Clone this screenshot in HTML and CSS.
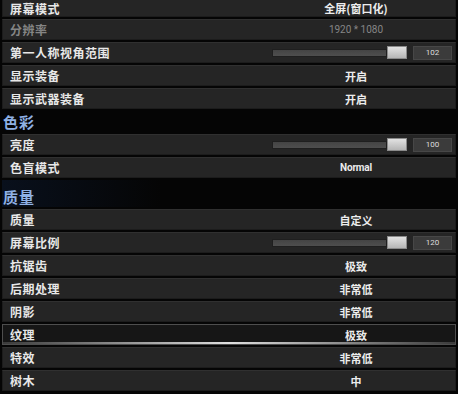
FILE: index.html
```html
<!DOCTYPE html>
<html>
<head>
    <title>画面设置</title>
    <link rel="stylesheet" href="styles.css">
</head>
<body>
    <div class="settings">
        <div class="row first"><div class="label">屏幕模式</div><div class="control"><span class="value">全屏(窗口化)</span></div></div>
        <div class="row"><div class="label dim">分辨率</div><div class="control"><span class="value dim num">1920 * 1080</span></div></div>
        <div class="row">
            <div class="label">第一人称视角范围</div>
            <div class="control slider">
                <div class="track"></div><div class="thumb"></div><div class="box">102</div>
            </div>
        </div>
        <div class="row"><div class="label">显示装备</div><div class="control"><span class="value">开启</span></div></div>
        <div class="row"><div class="label">显示武器装备</div><div class="control"><span class="value">开启</span></div></div>

        <div class="section-title">色彩</div>
        <div class="row">
            <div class="label">亮度</div>
            <div class="control slider">
                <div class="track"></div><div class="thumb"></div><div class="box">100</div>
            </div>
        </div>
        <div class="row"><div class="label">色盲模式</div><div class="control"><span class="value latin">Normal</span></div></div>

        <div class="section-title spaced">质量</div>
        <div class="row"><div class="label">质量</div><div class="control"><span class="value">自定义</span></div></div>
        <div class="row">
            <div class="label">屏幕比例</div>
            <div class="control slider">
                <div class="track"></div><div class="thumb"></div><div class="box">120</div>
            </div>
        </div>
        <div class="row"><div class="label">抗锯齿</div><div class="control"><span class="value">极致</span></div></div>
        <div class="row"><div class="label">后期处理</div><div class="control"><span class="value">非常低</span></div></div>
        <div class="row"><div class="label">阴影</div><div class="control"><span class="value">非常低</span></div></div>
        <div class="row active"><div class="label">纹理</div><div class="control"><span class="value">极致</span></div></div>
        <div class="row"><div class="label">特效</div><div class="control"><span class="value">非常低</span></div></div>
        <div class="row"><div class="label">树木</div><div class="control"><span class="value">中</span></div></div>
    </div>
</body>
</html>
```

FILE: styles.css
```css
body {
    margin: 0;
    padding: 0;
    background: #050505;
    font-family: "Noto Sans CJK SC", "Noto Sans", sans-serif;
    color: #e6e6e6;
    overflow: hidden;
}

.settings {
    padding: 0 2px;
    width: 454px;
}

.row {
    display: flex;
    align-items: center;
    height: 21px;
    box-sizing: border-box;
    margin-bottom: 2px;
    background: #252525;
    border: 1px solid #1c1c1c;
    border-top-color: #303030;
}

.row.first {
    height: 17px;
    border-top: none;
}

.row.active {
    background: linear-gradient(to right, #3a3a3a, #e0e0e0 50%, #3a3a3a) bottom / 100% 2px no-repeat, #161616;
    border-color: #4e4e4e;
}

.label {
    flex: 1;
    padding-left: 7px;
    font-size: 12px;
    font-weight: bold;
    letter-spacing: 0.5px;
    color: #e8e8e8;
}

.dim {
    color: #858585 !important;
}

.control {
    width: 198px;
    display: flex;
    justify-content: center;
    align-items: center;
}

.value {
    font-size: 11px;
    font-weight: bold;
    color: #ececec;
}

.value.num {
    font-family: "Roboto", sans-serif;
    font-weight: normal;
    font-size: 10px;
}

.value.latin {
    font-family: "Roboto", sans-serif;
    font-size: 10px;
    letter-spacing: -0.2px;
}

.slider {
    justify-content: flex-start;
    padding: 0 3px 0 15px;
    box-sizing: border-box;
}

.track {
    flex: 1;
    height: 6px;
    background: linear-gradient(#444444, #4e4e4e);
    border: 1px solid #1f1f1f;
}

.thumb {
    width: 20px;
    height: 13px;
    box-sizing: border-box;
    background: linear-gradient(#e2e2e2, #b5b5b5);
    border: 1px solid #8a8a8a;
}

.box {
    width: 39px;
    height: 14px;
    margin-left: 6px;
    box-sizing: border-box;
    background: #3b3b3b;
    border: 1px solid #474747;
    font-family: "Roboto", sans-serif;
    font-size: 8px;
    line-height: 12px;
    text-align: center;
    color: #dedede;
}

.section-title {
    height: 21px;
    margin-bottom: 2px;
    display: flex;
    align-items: center;
    padding-left: 1px;
    font-size: 15px;
    font-weight: bold;
    color: #8fb1e4;
    letter-spacing: 1px;
}

.section-title.spaced {
    margin-top: 2px;
    height: 27px;
    padding-top: 6px;
    box-sizing: border-box;
    background: linear-gradient(to right, #09101c, #050505 35%);
}
```
